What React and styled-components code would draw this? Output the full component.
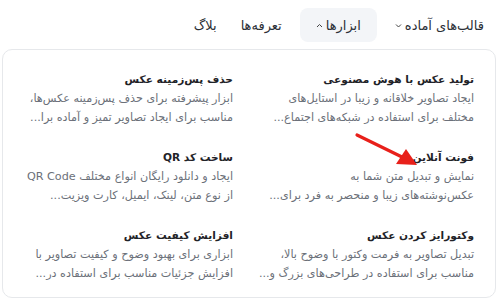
import React from "react";
import styled, { createGlobalStyle } from "styled-components";

const Global = createGlobalStyle`
  body {
    margin: 0;
    background: #ffffff;
    font-family: "DejaVu Sans", "Noto Sans", sans-serif;
  }
`;

const menu = [
  { label: "قالب‌های آماده", caret: "down" },
  { label: "ابزارها", caret: "up", active: true },
  { label: "تعرفه‌ها" },
  { label: "بلاگ" },
];

const tools = [
  {
    title: "تولید عکس با هوش مصنوعی",
    lines: ["ایجاد تصاویر خلاقانه و زیبا در استایل‌های", "مختلف برای استفاده در شبکه‌های اجتماع..."],
  },
  {
    title: "حذف پس‌زمینه عکس",
    lines: ["ابزار پیشرفته برای حذف پس‌زمینه عکس‌ها،", "مناسب برای ایجاد تصاویر تمیز و آماده برا..."],
  },
  {
    title: "فونت آنلاین",
    lines: ["نمایش و تبدیل متن شما به", "عکس‌نوشته‌های زیبا و منحصر به فرد برای..."],
  },
  {
    title: "ساخت کد QR",
    lines: ["ایجاد و دانلود رایگان انواع مختلف QR Code", "از نوع متن، لینک، ایمیل، کارت ویزیت..."],
  },
  {
    title: "وکتورایز کردن عکس",
    lines: ["تبدیل تصاویر به فرمت وکتور با وضوح بالا،", "مناسب برای استفاده در طراحی‌های بزرگ و..."],
  },
  {
    title: "افزایش کیفیت عکس",
    lines: ["ابزاری برای بهبود وضوح و کیفیت تصاویر با", "افزایش جزئیات مناسب برای استفاده در..."],
  },
];

function Caret({ dir }) {
  return (
    <svg width="7" height="5" viewBox="0 0 7 5">
      <path
        d={dir === "up" ? "M1 4 L3.5 1.5 L6 4" : "M1 1.5 L3.5 4 L6 1.5"}
        fill="none"
        stroke="#444"
        strokeWidth="1"
      />
    </svg>
  );
}

export default function App() {
  return (
    <Page dir="rtl">
      <Global />
      <Nav>
        {menu.map((m) => (
          <NavItem key={m.label} active={m.active}>
            {m.label}
            {m.caret && <Caret dir={m.caret} />}
          </NavItem>
        ))}
      </Nav>
      <Panel>
        <Grid>
          {tools.map((t) => (
            <Tool key={t.title}>
              <Title>{t.title}</Title>
              {t.lines.map((l) => (
                <Desc key={l}>{l}</Desc>
              ))}
            </Tool>
          ))}
        </Grid>
        <Arrow width="66" height="36" viewBox="0 0 66 36">
          <line x1="3" y1="3" x2="48" y2="25" stroke="#e8201a" strokeWidth="3.2" strokeLinecap="round" />
          <polygon points="63,33 42,32 52,17" fill="#e8201a" />
        </Arrow>
      </Panel>
    </Page>
  );
}

const Page = styled.div`
  width: 498px;
  height: 298px;
  overflow: hidden;
  background: #fff;
`;

const Nav = styled.nav`
  display: flex;
  align-items: center;
  gap: 12px;
  height: 49px;
  padding-right: 8px;
  padding-top: 1px;
  box-sizing: border-box;
`;

const NavItem = styled.div`
  display: flex;
  align-items: center;
  gap: 3px;
  height: 34px;
  padding: 0 ${(p) => (p.active ? "16px" : "6px")};
  border-radius: 8px;
  background: ${(p) => (p.active ? "#f3f5f8" : "transparent")};
  color: #2b2f36;
  font-size: 13px;
  white-space: nowrap;
`;

const Panel = styled.div`
  position: relative;
  margin: 0 2px;
  height: 249px;
  border: 1px solid #e6e8eb;
  border-radius: 10px;
  box-sizing: border-box;
`;

const Grid = styled.div`
  display: grid;
  grid-template-columns: 215px 215px;
  justify-content: end;
  column-gap: 26px;
  row-gap: 20px;
  padding: 19px 21px 0 15px;
`;

const Tool = styled.div`
  display: flex;
  flex-direction: column;
`;

const Title = styled.div`
  font-size: 10.6px;
  font-weight: bold;
  color: #1f2328;
  line-height: 20px;
  white-space: nowrap;
`;

const Desc = styled.div`
  font-size: 11.2px;
  color: #6b7079;
  line-height: 19px;
  white-space: nowrap;
`;

const Arrow = styled.svg`
  position: absolute;
  left: 351px;
  top: 82px;
`;
